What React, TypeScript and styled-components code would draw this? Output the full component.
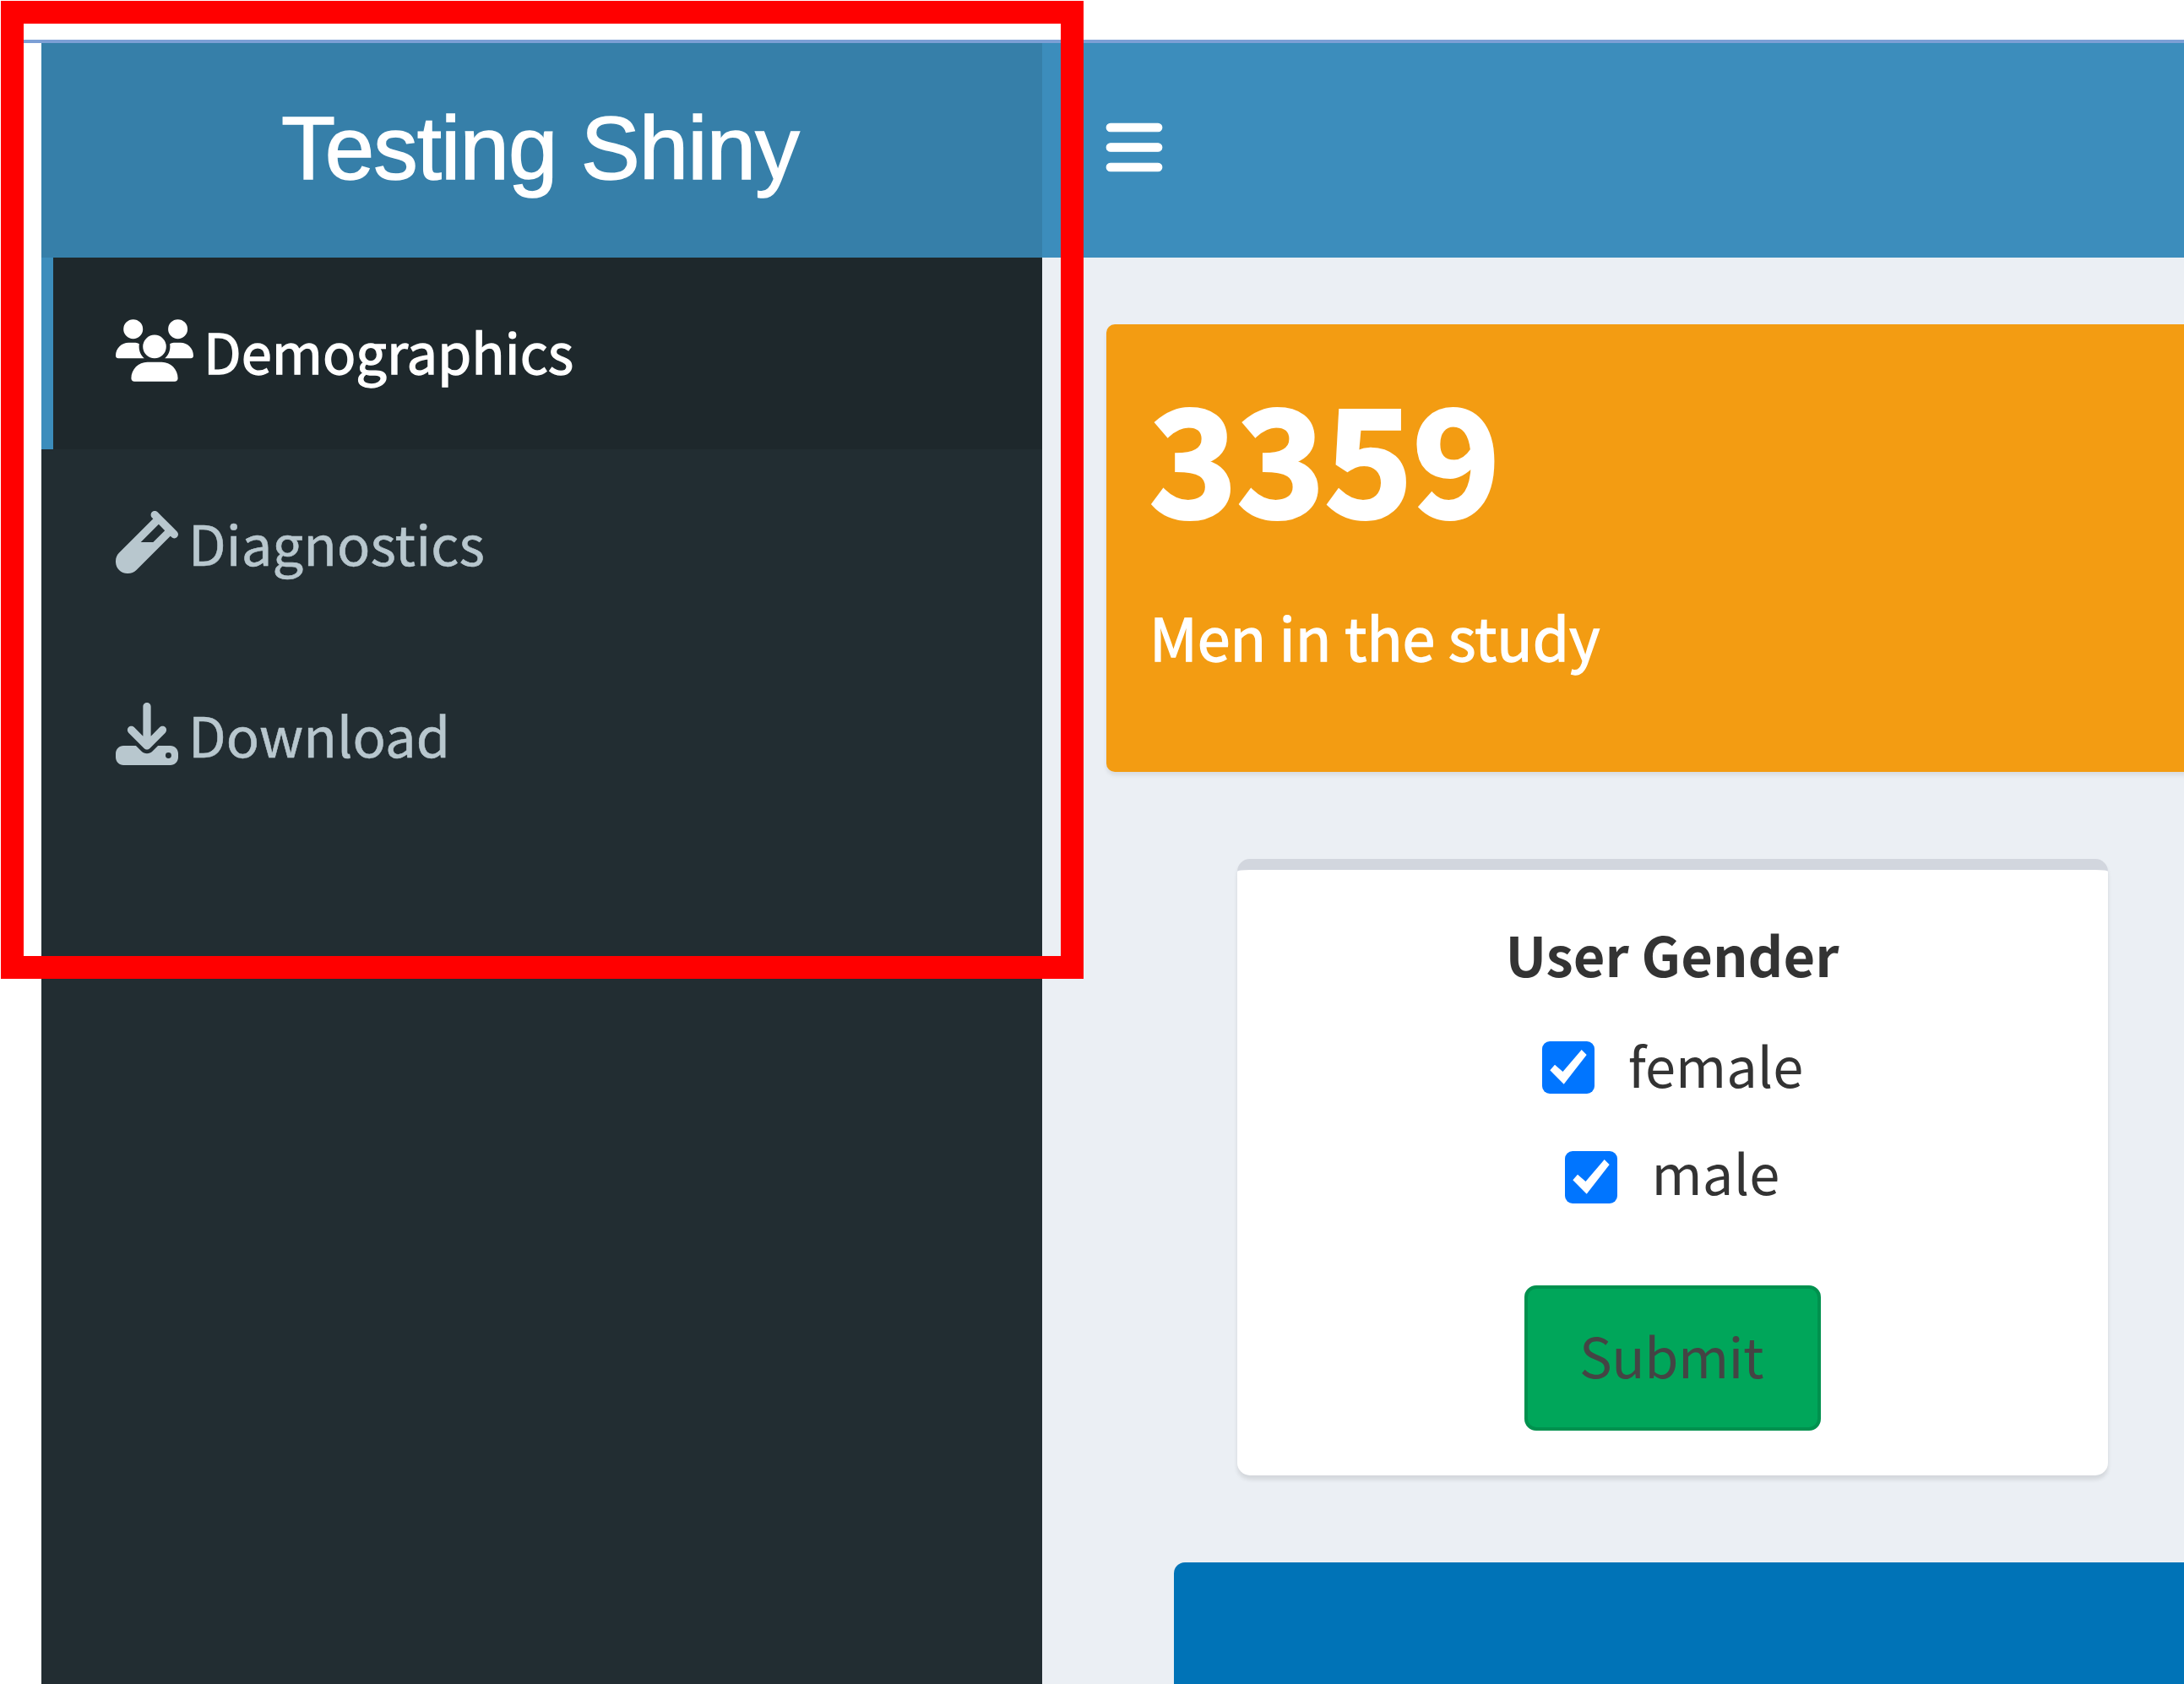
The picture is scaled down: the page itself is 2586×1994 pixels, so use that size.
import React from "react";
import styled, { createGlobalStyle } from "styled-components";
import { FaUsers, FaVial, FaDownload, FaBars } from "react-icons/fa6";

const GlobalStyle = createGlobalStyle`
  *, *::before, *::after { box-sizing: border-box; }
  html, body { margin: 0; background: #fff; }
  body {
    font-family: "Source Sans Pro", "Noto Sans CJK JP", sans-serif;
    font-size: 65px;
    color: #333;
  }
`;

const Page = styled.div`
  position: relative;
  width: 2586px;
  height: 1994px;
  overflow: hidden;
  display: flex;
  flex-direction: column;
  background: #fff;
`;

const WindowEdge = styled.div`
  flex: none;
  height: 51px;
  margin-left: 2px;
  border-bottom: 4px solid #7c9fd5;
`;

const Header = styled.header`
  flex: none;
  display: flex;
  height: 254px;
  margin-left: 49px;
  background: #3c8dbc;
  color: #fff;
`;

const Logo = styled.div`
  width: 1185px;
  display: flex;
  align-items: center;
  justify-content: center;
  padding: 0 4px 4px 0;
  background: #367fa9;
  font-family: "Liberation Sans", Arial, sans-serif;
  font-size: 105px;
  line-height: 1.15;
  letter-spacing: -0.9px;
  white-space: nowrap;
  -webkit-text-stroke: 1.5px currentColor;
`;

const Navbar = styled.nav`
  flex: 1;
  display: flex;
  align-items: center;
  padding: 0 0 8px 76px;
`;

const Toggle = styled.button`
  display: flex;
  padding: 0;
  border: 0;
  background: none;
  color: inherit;
  svg { width: 66px; height: 75px; overflow: visible; stroke: currentColor; stroke-width: 8px; }
`;

const Body = styled.div`
  flex: 1;
  min-height: 0;
  display: flex;
  margin-left: 49px;
`;

const Sidebar = styled.aside`
  flex: none;
  width: 1185px;
  background: #222d32;
`;

const NavItem = styled.a<{ $active?: boolean }>`
  display: flex;
  align-items: center;
  gap: 12px;
  height: 227px;
  padding: 0 0 8px 74px;
  border-left: 14px solid ${(p) => (p.$active ? "#3c8dbc" : "transparent")};
  background: ${(p) => (p.$active ? "#1e282c" : "transparent")};
  color: ${(p) => (p.$active ? "#fff" : "#b8c7ce")};
  white-space: nowrap;
`;

const NavIcon = styled.span<{ $wide?: boolean }>`
  display: flex;
  margin-top: 1px;
  svg { width: ${(p) => (p.$wide ? 92 : 74)}px; height: 74px; }
`;

const NavText = styled.span<{ $track?: number; $stroke?: number }>`
  letter-spacing: ${(p) => p.$track ?? 0}px;
  -webkit-text-stroke: ${(p) => p.$stroke ?? 0.6}px currentColor;
`;

const Content = styled.main`
  flex: 1;
  min-width: 0;
  display: flex;
  flex-direction: column;
  padding: 79px 0 0 76px;
  background: #ebeff4;
`;

const ValueBox = styled.section`
  flex: none;
  height: 530px;
  margin-right: -40px;
  padding: 64px 51px 0;
  border-radius: 10px;
  background: #f39c12;
  box-shadow: 0 4px 5px rgba(0, 0, 0, 0.08);
  color: #fff;
`;

const Value = styled.h3`
  margin: 0;
  font-size: 176px;
  font-weight: 700;
  line-height: 177px;
  -webkit-text-stroke: 4px currentColor;
`;

const Caption = styled.p`
  margin: 78px 0 0;
  font-size: 70px;
  line-height: 100px;
  letter-spacing: -0.1px;
  -webkit-text-stroke: 1.3px currentColor;
`;

const Card = styled.section`
  flex: none;
  display: flex;
  flex-direction: column;
  align-items: center;
  width: 1031px;
  height: 730px;
  margin: 103px 0 0 155px;
  padding-top: 64px;
  border-top: 13px solid #d2d6de;
  border-radius: 15px;
  background: #fff;
  box-shadow: 0 5px 5px rgba(0, 0, 0, 0.1);
`;

const FieldTitle = styled.div`
  margin-bottom: 61px;
  padding-right: 1px;
  font-weight: 700;
  line-height: 70px;
`;

const Options = styled.div`
  display: flex;
  flex-direction: column;
  align-items: center;
  gap: 57px;
`;

const Option = styled.label<{ $track?: number }>`
  display: flex;
  align-items: center;
  gap: 40px;
  height: 70px;
  line-height: 70px;
  letter-spacing: ${(p) => p.$track ?? 0}px;
`;

const Check = styled.span<{ $drop: number }>`
  display: flex;
  width: 62px;
  height: 62px;
  margin-top: ${(p) => p.$drop}px;
  border-radius: 9px;
  background: #0075ff;
`;

const Submit = styled.button`
  width: 351px;
  height: 172px;
  margin: 100px 1px 0 0;
  padding: 0 2px 8px 0;
  border: 4px solid #00914e;
  border-radius: 14px;
  background: #00a65a;
  color: #444;
  font: inherit;
  line-height: 90px;
  letter-spacing: -0.5px;
`;

const BluePanel = styled.section`
  flex: 1;
  margin: 103px -40px -40px 80px;
  border-radius: 13px;
  background: #0073b7;
`;

const Highlight = styled.div`
  position: absolute;
  left: 1px;
  top: 1px;
  width: 1282px;
  height: 1158px;
  border: 27px solid #f00;
`;

function CheckBox({ drop }: { drop: number }) {
  return (
    <Check $drop={drop}>
      <svg width="62" height="62" viewBox="0 0 62 62" fill="#fff">
        <path d="M9.3 34.3 15 27.7 24.5 36 46.7 10 52.7 16 25.7 50.7Z" />
      </svg>
    </Check>
  );
}

export default function App() {
  return (
    <Page>
      <GlobalStyle />
      <WindowEdge />
      <Header>
        <Logo>Testing Shiny</Logo>
        <Navbar>
          <Toggle aria-label="Toggle navigation"><FaBars /></Toggle>
        </Navbar>
      </Header>
      <Body>
        <Sidebar>
          <NavItem $active>
            <NavIcon $wide><FaUsers /></NavIcon>
            <NavText $stroke={1.3}>Demographics</NavText>
          </NavItem>
          <NavItem>
            <NavIcon><FaVial /></NavIcon>
            <NavText $track={0.1}>Diagnostics</NavText>
          </NavItem>
          <NavItem>
            <NavIcon><FaDownload /></NavIcon>
            <NavText $track={0.1}>Download</NavText>
          </NavItem>
        </Sidebar>
        <Content>
          <ValueBox>
            <Value>3359</Value>
            <Caption>Men in the study</Caption>
          </ValueBox>
          <Card>
            <FieldTitle>User Gender</FieldTitle>
            <Options>
              <Option><CheckBox drop={8} />female</Option>
              <Option $track={0.2}><CheckBox drop={14} />male</Option>
            </Options>
            <Submit>Submit</Submit>
          </Card>
          <BluePanel />
        </Content>
      </Body>
      <Highlight />
    </Page>
  );
}
